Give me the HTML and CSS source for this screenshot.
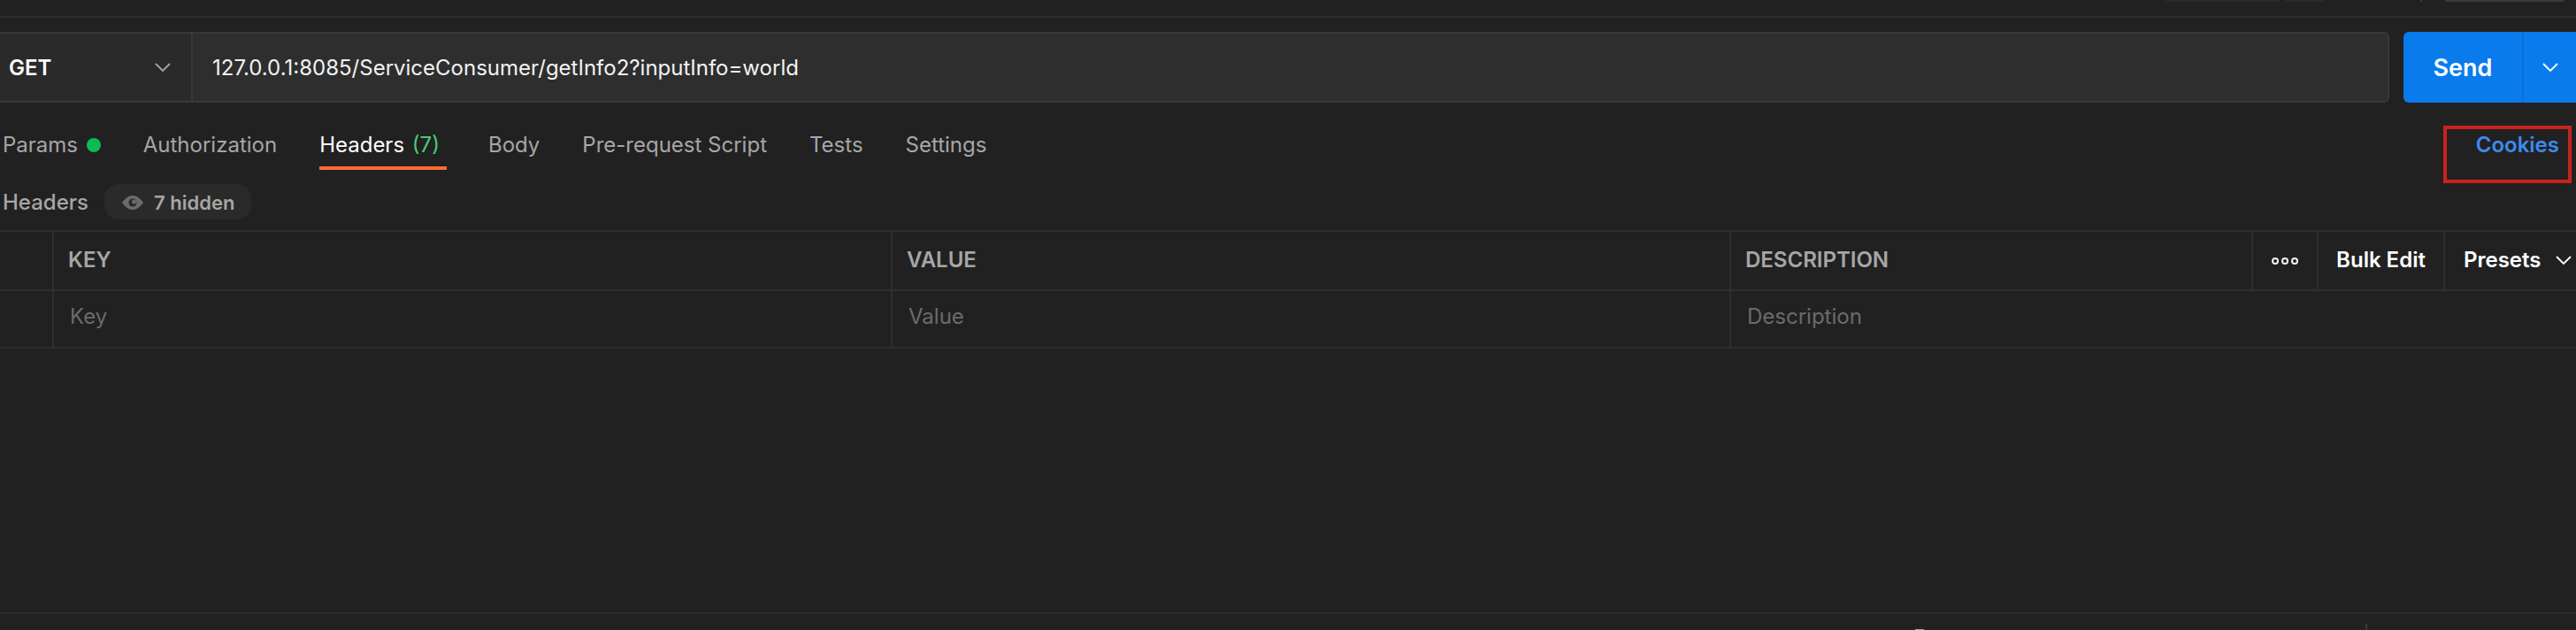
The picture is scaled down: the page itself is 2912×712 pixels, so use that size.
FILE: index.html
```html
<!DOCTYPE html>
<html lang="en">
<head>
  <meta charset="UTF-8">
  <meta name="viewport" content="width=device-width, initial-scale=1.0">
  <title>Postman request headers</title>
  <link rel="stylesheet" href="styles.css">
</head>
<body>
  <div class="top-strip">
    <span class="strip-piece strip-a"></span>
    <span class="strip-piece strip-b"></span>
    <span class="strip-tick"></span>
    <span class="strip-piece strip-c"></span>
  </div>

  <div class="request-bar">
    <div class="url-group">
      <div class="method">
        <span>GET</span>
        <svg class="chevron" viewBox="0 0 18 12"><polyline points="1,2 9,10 17,2"/></svg>
      </div>
      <div class="url">127.0.0.1:8085/ServiceConsumer/getInfo2?inputInfo=world</div>
    </div>
    <div class="send">
      <span class="send-label">Send</span>
      <span class="send-arrow">
        <svg class="chevron" viewBox="0 0 18 12"><polyline points="1,2 9,10 17,2"/></svg>
      </span>
    </div>
  </div>

  <div class="tabs">
    <div class="tab tab-params">Params <span class="dot"></span></div>
    <div class="tab tab-auth">Authorization</div>
    <div class="tab tab-active">Headers <span class="count">(7)</span></div>
    <div class="tab tab-body">Body</div>
    <div class="tab tab-script">Pre-request Script</div>
    <div class="tab tab-tests">Tests</div>
    <div class="tab tab-settings">Settings</div>
    <div class="cookies-box"><span class="cookies">Cookies</span></div>
  </div>

  <div class="sub-head">
    <span class="sub-title">Headers</span>
    <div class="hidden-pill">
      <svg class="eye" viewBox="0 0 24 16">
        <path class="eye-shape" d="M0 8C4 2.500 8 0 12 0s8 2.500 12 8c-4 5.500-8 8-12 8S4 13.500 0 8z"/>
        <circle class="eye-iris" cx="12" cy="8" r="4.500"/>
        <circle class="eye-shape" cx="13.500" cy="7" r="2.500"/>
      </svg>
      <span>7 hidden</span>
    </div>
  </div>

  <div class="table">
    <div class="row row-head">
      <div class="cell cell-check"></div>
      <div class="cell cell-key">KEY</div>
      <div class="cell cell-value">VALUE</div>
      <div class="cell cell-desc">DESCRIPTION</div>
      <div class="cell cell-more">
        <span class="ring"></span><span class="ring"></span><span class="ring"></span>
      </div>
      <div class="cell cell-bulk">Bulk Edit</div>
      <div class="cell cell-presets">
        <span>Presets</span>
        <svg class="chevron" viewBox="0 0 18 12"><polyline points="1,2 9,10 17,2"/></svg>
      </div>
    </div>
    <div class="row row-empty">
      <div class="cell cell-check"></div>
      <div class="cell cell-key">Key</div>
      <div class="cell cell-value">Value</div>
      <div class="cell cell-desc">Description</div>
    </div>
  </div>

  <div class="spacer"></div>

  <div class="footer">
    <span class="footer-glyph"></span>
    <span class="footer-tick"></span>
  </div>
</body>
</html>
```
FILE: styles.css
```css
* {
  margin: 0;
  padding: 0;
  box-sizing: border-box;
}

html, body {
  height: 100%;
}

body {
  display: flex;
  flex-direction: column;
  overflow: hidden;
  background: #212121;
  color: #fff;
  font-family: Inter, 'Noto Sans', sans-serif;
  font-size: 24px;
}

.top-strip {
  display: flex;
  height: 20px;
  border-bottom: 2px solid #2e2e2e;
}

.strip-piece {
  height: 2px;
  background: #292929;
}

.strip-a {
  width: 129px;
  margin-left: 2448px;
}

.strip-b {
  width: 45px;
  margin-left: 6px;
}

.strip-tick {
  width: 2px;
  height: 2px;
  margin-left: 108px;
  background: #3a3a3a;
}

.strip-c {
  width: 135px;
  margin-left: 26px;
  background: #3a3a3a;
  border-radius: 0 0 3px 3px;
}

.request-bar {
  display: flex;
  height: 80px;
  margin-top: 16px;
}

.url-group {
  display: flex;
  width: 2701px;
  background: #2e2e2e;
  border: 2px solid #383838;
  border-left: none;
  border-radius: 0 6px 6px 0;
}

.method {
  display: flex;
  align-items: center;
  justify-content: space-between;
  width: 218px;
  padding: 0 23px 0 10px;
  background: #2a2a2a;
  border-right: 2px solid #383838;
  font-size: 24px;
  font-weight: 600;
}

.method .chevron {
  stroke: #a6a6a6;
}

.chevron {
  width: 18px;
  height: 12px;
  fill: none;
  stroke: #fff;
  stroke-width: 1.800;
}

.url {
  display: flex;
  align-items: center;
  padding-left: 22px;
  font-size: 24px;
  color: #f2f2f2;
}

.send {
  display: flex;
  flex: 1;
  margin-left: 16px;
  background: #097bed;
  border-radius: 6px 0 0 6px;
  font-size: 27px;
  font-weight: 600;
}

.send-label {
  display: flex;
  align-items: center;
  justify-content: center;
  width: 134px;
}

.send-arrow {
  display: flex;
  flex: 1;
  align-items: center;
  justify-content: center;
  border-left: 2px solid #0a6fd6;
}

.tabs {
  display: flex;
  height: 92px;
  padding-top: 26px;
  position: relative;
}

.tab {
  height: 50px;
  line-height: 44px;
  margin-left: 48px;
  color: #a6a6a6;
  white-space: nowrap;
}

.tab-params {
  margin-left: 3px;
}

.dot {
  display: inline-block;
  width: 16px;
  height: 16px;
  margin-left: 3px;
  border-radius: 50%;
  background: #0cbb52;
}

.tab-active {
  padding-right: 8px;
  color: #fff;
  border-bottom: 4px solid #ff6c37;
}

.count {
  margin-left: 2px;
  color: #49cc78;
}

.tab-body {
  margin-left: 47px;
}

.cookies-box {
  position: absolute;
  left: 2762px;
  top: 26px;
  width: 145px;
  height: 65px;
  border: 4px solid #c9221f;
  text-align: right;
  padding-right: 10px;
  line-height: 36px;
}

.cookies {
  color: #3d8aef;
  font-weight: 600;
}

.sub-head {
  display: flex;
  align-items: center;
  height: 40px;
  padding-left: 3px;
}

.sub-title {
  font-size: 24px;
  font-weight: 500;
  color: #a6a6a6;
}

.hidden-pill {
  display: flex;
  align-items: center;
  gap: 12px;
  height: 40px;
  margin-left: 18px;
  padding: 2px 19px 0 20px;
  background: #2a2a2a;
  border-radius: 16px;
  color: #a6a6a6;
  font-size: 22px;
  font-weight: 600;
}

.eye {
  width: 24px;
  height: 16px;
}

.eye-shape {
  fill: #6b6b6b;
}

.eye-iris {
  fill: #2a2a2a;
}

.table {
  margin-top: 12px;
  border-top: 2px solid #2e2e2e;
}

.row {
  display: flex;
  height: 65px;
  border-bottom: 2px solid #2e2e2e;
}

.row-head {
  height: 67px;
}

.cell {
  display: flex;
  align-items: center;
  padding-left: 16px;
  padding-bottom: 2px;
  border-right: 2px solid #2e2e2e;
  white-space: nowrap;
}

.row-head .cell-key,
.row-head .cell-value,
.row-head .cell-desc {
  color: #a6a6a6;
  font-size: 24px;
  font-weight: 600;
}

.row-empty .cell {
  padding-left: 18px;
  padding-bottom: 6px;
  color: #6b6b6b;
}

.row-empty .cell-check {
  padding: 0;
}

.cell-check {
  width: 61px;
  padding: 0;
}

.cell-key {
  width: 948px;
}

.cell-value {
  width: 948px;
}

.cell-desc {
  width: 590px;
}

.row-empty .cell-desc {
  border-right: none;
}

.cell-more {
  justify-content: center;
  gap: 3px;
  width: 74px;
  padding: 0;
}

.ring {
  width: 8px;
  height: 8px;
  border: 2px solid #f2f2f2;
  border-radius: 50%;
}

.cell-bulk {
  justify-content: center;
  width: 143px;
  padding: 0 0 2px;
  font-weight: 600;
}

.cell-presets {
  gap: 16px;
  flex: 1;
  padding-left: 21px;
  border-right: none;
  font-weight: 600;
}

.spacer {
  flex: 1;
}

.footer {
  display: flex;
  align-items: flex-end;
  height: 20px;
  border-top: 2px solid #2e2e2e;
}

.footer-glyph {
  width: 10px;
  height: 1px;
  margin-left: 2165px;
  background: #a6a6a6;
}

.footer-tick {
  width: 2px;
  height: 7px;
  margin-left: 499px;
  background: #3a3a3a;
}
```
